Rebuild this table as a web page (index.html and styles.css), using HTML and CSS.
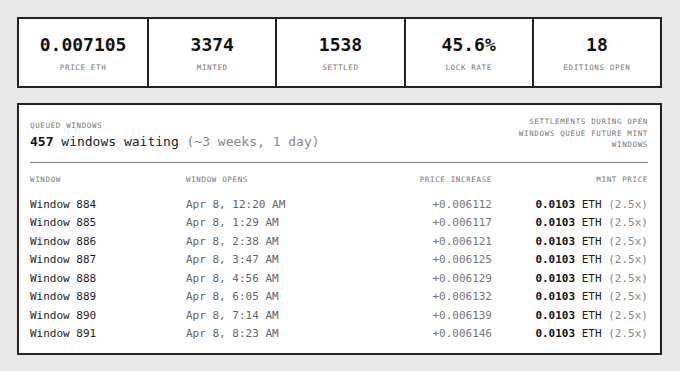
FILE: index.html
```html
<!DOCTYPE html>
<html>
<head>
<meta charset="utf-8">
<link rel="stylesheet" href="styles.css">
</head>
<body>
<div class="page">
  <section class="stats">
    <div class="stat"><div class="num">0.007105</div><div class="lbl">PRICE ETH</div></div>
    <div class="stat"><div class="num">3374</div><div class="lbl">MINTED</div></div>
    <div class="stat"><div class="num">1538</div><div class="lbl">SETTLED</div></div>
    <div class="stat"><div class="num">45.6%</div><div class="lbl">LOCK RATE</div></div>
    <div class="stat"><div class="num">18</div><div class="lbl">EDITIONS OPEN</div></div>
  </section>
  <section class="queue">
    <div class="qhead">
      <div class="qleft">
        <div class="lbl qlbl">QUEUED WINDOWS</div>
        <div class="qtitle"><b>457</b> windows waiting <span class="muted">(~3 weeks, 1 day)</span></div>
      </div>
      <div class="lbl note">SETTLEMENTS DURING OPEN<br>WINDOWS QUEUE FUTURE MINT<br>WINDOWS</div>
    </div>
    <div class="table">
      <div class="row hdr">
        <div class="lbl">WINDOW</div>
        <div class="lbl">WINDOW OPENS</div>
        <div class="lbl r">PRICE INCREASE</div>
        <div class="lbl r">MINT PRICE</div>
      </div>
      <div class="row"><div class="w">Window 884</div><div class="d">Apr 8, 12:20 AM</div><div class="inc r">+0.006112</div><div class="r"><b>0.0103</b> ETH <span class="x">(2.5x)</span></div></div>
      <div class="row"><div class="w">Window 885</div><div class="d">Apr 8, 1:29 AM</div><div class="inc r">+0.006117</div><div class="r"><b>0.0103</b> ETH <span class="x">(2.5x)</span></div></div>
      <div class="row"><div class="w">Window 886</div><div class="d">Apr 8, 2:38 AM</div><div class="inc r">+0.006121</div><div class="r"><b>0.0103</b> ETH <span class="x">(2.5x)</span></div></div>
      <div class="row"><div class="w">Window 887</div><div class="d">Apr 8, 3:47 AM</div><div class="inc r">+0.006125</div><div class="r"><b>0.0103</b> ETH <span class="x">(2.5x)</span></div></div>
      <div class="row"><div class="w">Window 888</div><div class="d">Apr 8, 4:56 AM</div><div class="inc r">+0.006129</div><div class="r"><b>0.0103</b> ETH <span class="x">(2.5x)</span></div></div>
      <div class="row"><div class="w">Window 889</div><div class="d">Apr 8, 6:05 AM</div><div class="inc r">+0.006132</div><div class="r"><b>0.0103</b> ETH <span class="x">(2.5x)</span></div></div>
      <div class="row"><div class="w">Window 890</div><div class="d">Apr 8, 7:14 AM</div><div class="inc r">+0.006139</div><div class="r"><b>0.0103</b> ETH <span class="x">(2.5x)</span></div></div>
      <div class="row"><div class="w">Window 891</div><div class="d">Apr 8, 8:23 AM</div><div class="inc r">+0.006146</div><div class="r"><b>0.0103</b> ETH <span class="x">(2.5x)</span></div></div>
    </div>
  </section>
</div>
</body>
</html>
```

FILE: styles.css
```css
* { box-sizing: border-box; }
html, body { margin: 0; padding: 0; }
body {
  background: #e8e8e8;
  font-family: "DejaVu Sans Mono", "Liberation Mono", monospace;
  color: #1c1c1c;
}
.page {
  padding: 17px 18px 17px 17px;
  display: flex;
  flex-direction: column;
  gap: 15px;
}
.stats {
  display: grid;
  grid-template-columns: repeat(5, 1fr);
  background: #fff;
  border: 2px solid #222;
  height: 71px;
}
.stat {
  display: flex;
  flex-direction: column;
  align-items: center;
  padding-top: 15px;
}
.stat + .stat { border-left: 2px solid #222; }
.num {
  font-size: 18px;
  line-height: 22px;
  font-weight: bold;
  color: #111;
}
.lbl {
  font-size: 7.5px;
  line-height: 10px;
  letter-spacing: 0.65px;
  color: #777;
}
.stat .lbl { margin-top: 7px; }
.queue {
  background: #fff;
  border: 2px solid #222;
  padding: 11px 12px 9px 11px;
}
.qhead {
  display: flex;
  justify-content: space-between;
  align-items: flex-start;
  border-bottom: 1px solid #888;
  padding-bottom: 11px;
}
.qlbl { margin-top: 4px; line-height: 12px; }
.qtitle {
  font-size: 13px;
  line-height: 16px;
  margin-top: 2px;
  color: #222;
}
.qtitle b { color: #111; }
.muted { color: #888; }
.note {
  text-align: right;
  line-height: 11.5px;
}
.table { margin-top: 12px; }
.row {
  display: grid;
  grid-template-columns: 156px 1fr 1fr 156px;
  font-size: 11px;
  line-height: 18.57px;
}
.row.hdr { line-height: 12px; margin-bottom: 11px; }
.r { text-align: right; }
.w { color: #1e1e1e; }
.d { color: #666; }
.inc { color: #777; }
.row b { color: #111; }
.x { color: #888; }
```
